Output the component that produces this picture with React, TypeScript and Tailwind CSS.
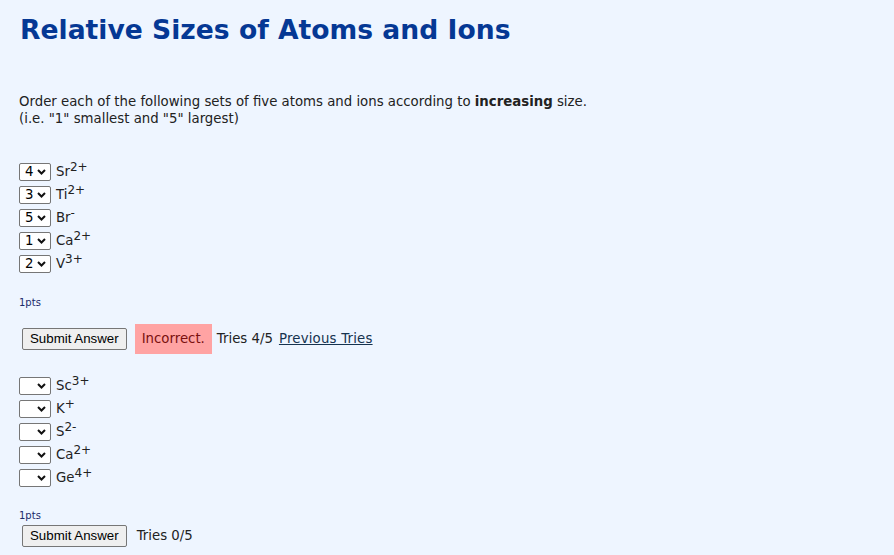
import React from "react";

type Item = { value: string; base: string; charge: string };

const setOne: Item[] = [
  { value: "4", base: "Sr", charge: "2+" },
  { value: "3", base: "Ti", charge: "2+" },
  { value: "5", base: "Br", charge: "-" },
  { value: "1", base: "Ca", charge: "2+" },
  { value: "2", base: "V", charge: "3+" },
];

const setTwo: Item[] = [
  { value: "", base: "Sc", charge: "3+" },
  { value: "", base: "K", charge: "+" },
  { value: "", base: "S", charge: "2-" },
  { value: "", base: "Ca", charge: "2+" },
  { value: "", base: "Ge", charge: "4+" },
];

function Chevron() {
  return (
    <svg width="9" height="6" viewBox="0 0 9 6" className="shrink-0">
      <path d="M1 1 L4.5 4.5 L8 1" fill="none" stroke="#111" strokeWidth="2" />
    </svg>
  );
}

function FakeSelect({ value }: { value: string }) {
  return (
    <div className="flex h-[18px] w-[32px] items-center justify-between rounded-[2px] border border-[#767676] bg-white pl-[5px] pr-[4px] text-[13.3px] leading-none text-black">
      <span>{value}</span>
      <Chevron />
    </div>
  );
}

function Row({ item }: { item: Item }) {
  return (
    <div className="flex h-[23px] items-center gap-[5px]">
      <FakeSelect value={item.value} />
      <span className="text-[13.3px] text-[#222]">
        {item.base}
        <sup className="top-[-5px] text-[12px]">{item.charge}</sup>
      </span>
    </div>
  );
}

function SubmitButton() {
  return (
    <button className="h-[22px] rounded-[2px] border border-[#767676] bg-[#efefef] px-[7px] font-['Liberation_Sans',Arial,sans-serif] text-[13.3px] text-black">
      Submit Answer
    </button>
  );
}

export default function App() {
  return (
    <div className="min-h-[555px] w-full bg-[#eef5ff] pl-[19px] font-['DejaVu_Sans',Verdana,sans-serif] text-[#222]">
      <h1 className="pt-[13px] pl-[1px] text-[26.6px] leading-[34px] font-bold text-[#053894]">
        Relative Sizes of Atoms and Ions
      </h1>

      <p className="mt-[46px] text-[13.3px] leading-[17px]">
        Order each of the following sets of five atoms and ions according to{" "}
        <b>increasing</b> size.
        <br />
        (i.e. "1" smallest and "5" largest)
      </p>

      <div className="mt-[33px]">
        {setOne.map((it) => (
          <Row key={it.base + it.charge} item={it} />
        ))}
      </div>

      <div className="mt-[20px] text-[10px] text-[#1a2a6a]">1pts</div>

      <div className="mt-[14px] flex items-center pl-[3px]">
        <SubmitButton />
        <span className="ml-[8px] flex h-[30px] items-center bg-[#ffa3a3] px-[7px] text-[13.3px] text-[#7a1010]">
          Incorrect.
        </span>
        <span className="ml-[5px] text-[13.3px]">Tries 4/5</span>
        <a className="ml-[6px] text-[13.3px] tracking-[0.2px] text-[#16334f] underline">Previous Tries</a>
      </div>

      <div className="mt-[20px]">
        {setTwo.map((it) => (
          <Row key={it.base + it.charge} item={it} />
        ))}
      </div>

      <div className="mt-[19px] text-[10px] text-[#1a2a6a]">1pts</div>

      <div className="mt-[2px] flex items-center pl-[3px]">
        <SubmitButton />
        <span className="ml-[10px] text-[13.3px]">Tries 0/5</span>
      </div>
    </div>
  );
}
